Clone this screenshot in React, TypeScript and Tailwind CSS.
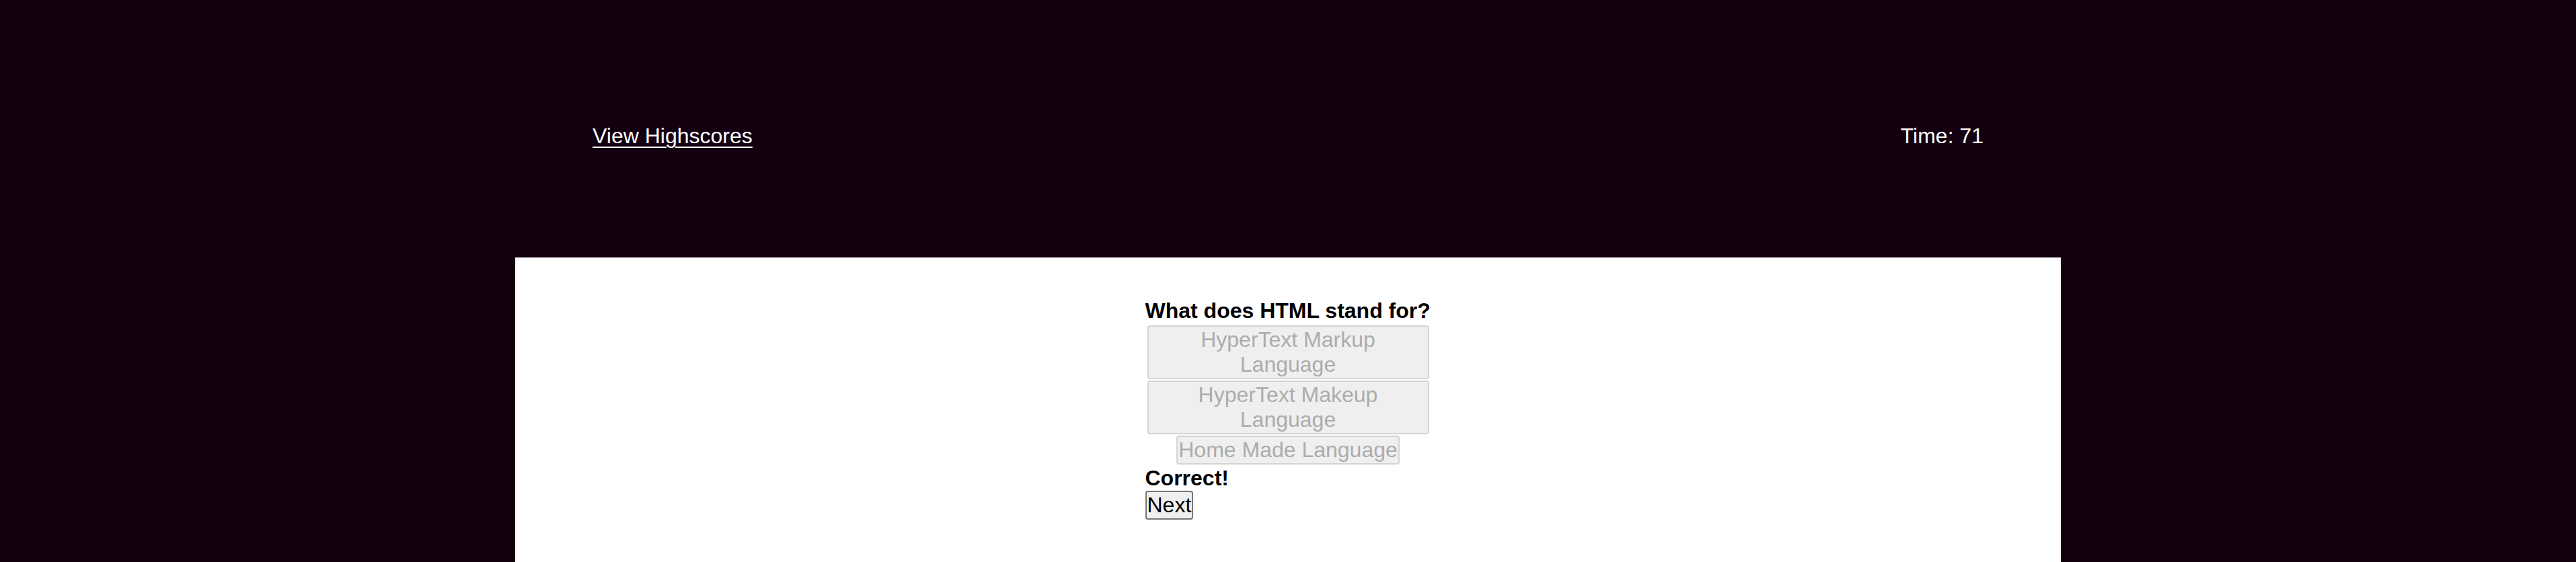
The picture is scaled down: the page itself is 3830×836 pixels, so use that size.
export default function App() {
  const answers = [
    { text: 'HyperText Markup Language', wide: true },
    { text: 'HyperText Makeup Language', wide: true },
    { text: 'Home Made Language', wide: false },
  ];

  return (
    <div className="min-h-[836px] bg-[#120010] font-['Liberation_Sans',Arial,sans-serif] text-[32px] leading-[37px]">
      {/* Header */}
      <header className="mx-auto flex h-[383px] w-[60%] items-start justify-between px-[115px] pt-[184px] text-white">
        <a href="#" className="underline decoration-2 underline-offset-[5px]">
          View Highscores
        </a>
        <span>Time: 71</span>
      </header>

      {/* Quiz panel */}
      <main className="mx-auto min-h-[453px] w-[60%] bg-white pt-[61px] text-black">
        <div className="mx-auto flex w-[425px] flex-col">
          <h2 className="font-bold">What does HTML stand for?</h2>
          <div className="mt-[3px] flex flex-col items-center gap-[2px] px-[3px]">
            {answers.map((a) => (
              <button
                key={a.text}
                disabled
                className={
                  a.wide
                    ? 'w-full rounded-[4px] border-2 border-[#d4d4d4] bg-[#efefef] px-[40px] py-[1px] text-center text-[#acacac]'
                    : 'rounded-[4px] border-2 border-[#d4d4d4] bg-[#efefef] px-[1px] py-[1px] text-center text-[#acacac]'
                }
              >
                {a.text}
              </button>
            ))}
          </div>
          <p className="mt-[2px] font-bold">Correct!</p>
          <div>
            <button className="rounded-[4px] border-2 border-[#767676] bg-[#efefef] px-[1px] py-[1px] text-black">
              Next
            </button>
          </div>
        </div>
      </main>
    </div>
  );
}
